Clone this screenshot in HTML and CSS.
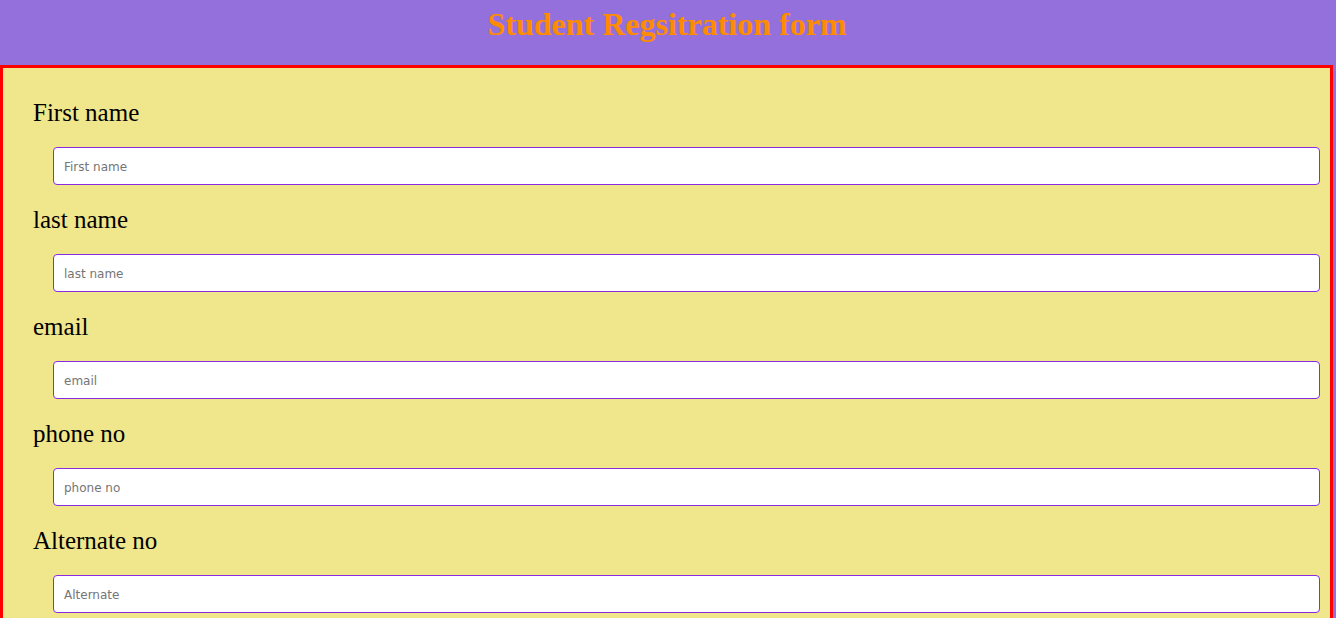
FILE: index.html
```html
<!DOCTYPE html>
<html lang="en">
<head>
<meta charset="utf-8">
<title>Student Regsitration form</title>
<link rel="stylesheet" href="styles.css">
</head>
<body>
<header class="page-header">
  <h1 class="page-title">Student Regsitration form</h1>
</header>
<form class="reg-form">
  <div class="field">
    <label class="field-label" for="fname">First name</label>
    <input class="field-input" id="fname" type="text" placeholder="First name">
  </div>
  <div class="field">
    <label class="field-label" for="lname">last name</label>
    <input class="field-input" id="lname" type="text" placeholder="last name">
  </div>
  <div class="field">
    <label class="field-label" for="email">email</label>
    <input class="field-input" id="email" type="text" placeholder="email">
  </div>
  <div class="field">
    <label class="field-label" for="phone">phone no</label>
    <input class="field-input" id="phone" type="text" placeholder="phone no">
  </div>
  <div class="field">
    <label class="field-label" for="alt">Alternate no</label>
    <input class="field-input" id="alt" type="text" placeholder="Alternate">
  </div>
</form>
</body>
</html>
```

FILE: styles.css
```css
html, body {
  margin: 0;
  padding: 0;
}
body {
  background: #9370db;
  font-family: "Liberation Serif", "Times New Roman", serif;
}
.page-header {
  padding-top: 6px;
  height: 65px;
  box-sizing: border-box;
}
.page-title {
  margin: 0;
  text-align: center;
  font-size: 32px;
  font-weight: bold;
  line-height: 37px;
  color: #ff8c00;
  padding-right: 2px;
}
.reg-form {
  margin: 0 3px 0 0;
  border: 3px solid #ff0000;
  background: #f0e68c;
  padding: 31px 10px 20px 30px;
  display: flex;
  flex-direction: column;
}
.field {
  display: flex;
  flex-direction: column;
  margin-bottom: 21px;
}
.field-label {
  font-size: 25px;
  line-height: 28px;
  color: #000;
  margin-bottom: 20px;
}
.field-input {
  margin-left: 20px;
  height: 38px;
  box-sizing: border-box;
  border: 1px solid #8a2be2;
  border-radius: 4px;
  background: #fff;
  padding: 2px 10px 0;
  font-family: "DejaVu Sans", Verdana, sans-serif;
  font-size: 12px;
  outline: none;
}
.field-input::placeholder {
  color: #757575;
}
```
